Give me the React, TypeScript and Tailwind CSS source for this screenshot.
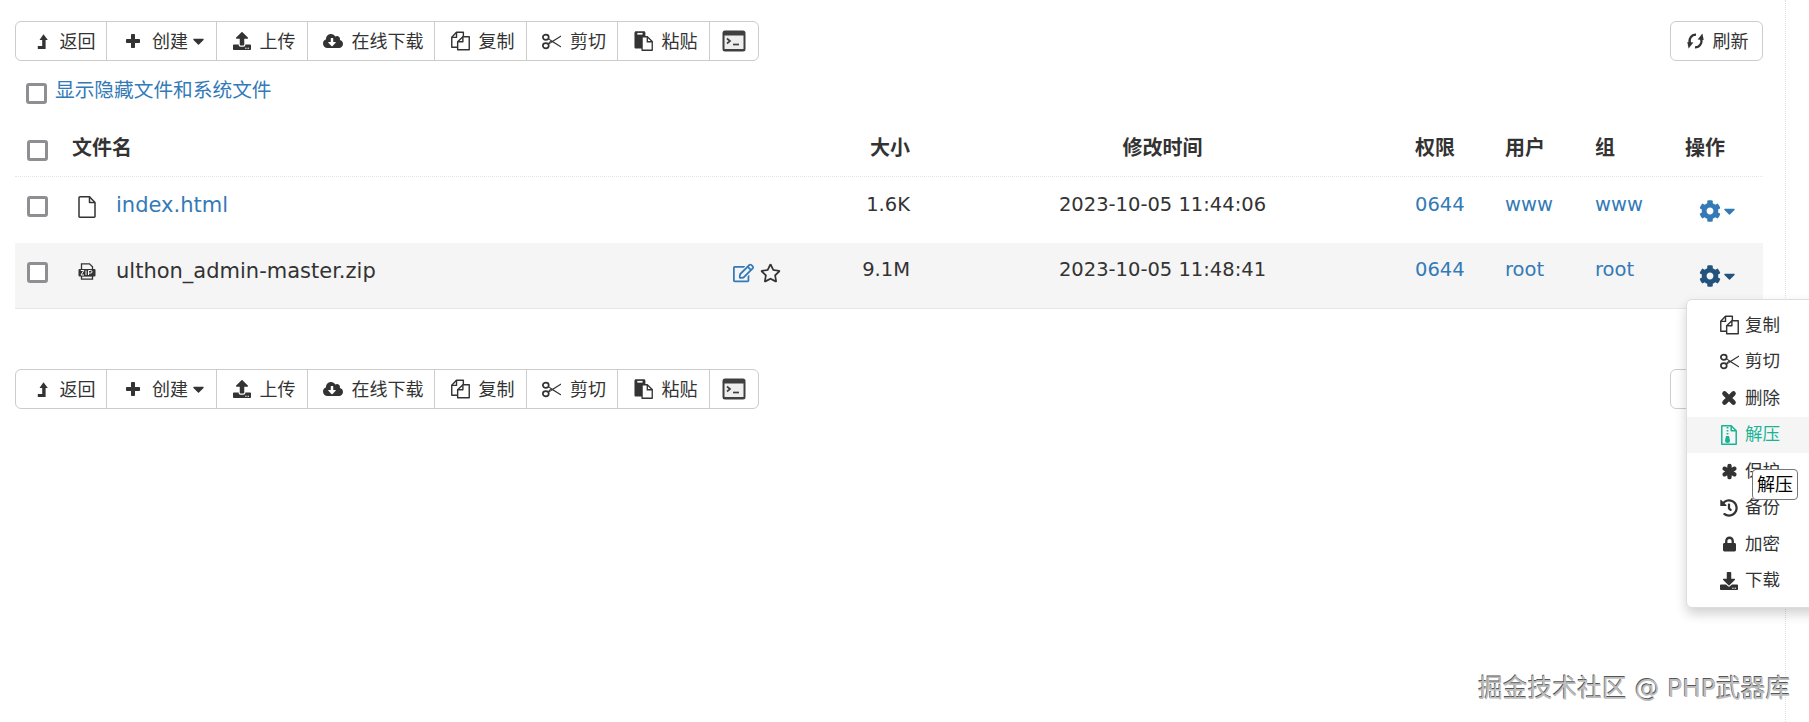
import React from 'react';
import {
    FaCaretDown,
    FaCloudDownloadAlt,
    FaCog,
    FaDownload,
    FaHistory,
    FaLock,
    FaRegEdit,
    FaRegStar,
    FaUpload,
} from 'react-icons/fa';

const cjkSans = 'font-["DejaVu_Sans","Noto_Sans_CJK_SC",sans-serif]';

function BackIcon({ className }: { className?: string }) {
    return (
        <svg className={className} viewBox="0 0 11 15" fill="currentColor">
            <path d="M6.500.3 10.800 6H8.600v9H.8v-3h4.400V6H2.500z" />
        </svg>
    );
}

function PlusIcon({ className }: { className?: string }) {
    return (
        <svg className={className} viewBox="0 0 16 16" fill="currentColor" stroke="currentColor" strokeWidth="1" strokeLinejoin="round">
            <path d="M6.500 1.500h3v5h5v3h-5v5h-3v-5h-5v-3h5z" />
        </svg>
    );
}

function CrossIcon({ className }: { className?: string }) {
    return (
        <svg className={className} viewBox="0 0 16 16" fill="none" stroke="currentColor" strokeWidth="4.600" strokeLinecap="round">
            <path d="M3.500 3.500l9 9M12.500 3.500l-9 9" />
        </svg>
    );
}

function StarBurstIcon({ className }: { className?: string }) {
    return (
        <svg className={className} viewBox="0 0 18 18" fill="none" stroke="currentColor" strokeWidth="4.600" strokeLinecap="round">
            <path d="M9 3v12M3.800 6l10.400 6M14.200 6 3.800 12" />
        </svg>
    );
}

function ArchiveIcon({ className }: { className?: string }) {
    return (
        <svg className={className} viewBox="0 0 16 20" fill="none" stroke="currentColor" strokeWidth="1.500" strokeLinejoin="round">
            <path d="M.8.8h9.400l5 5v13.400H.8z" />
            <path d="M10.200.8v5h5" />
            <path d="M6.500 2v1.500M6.500 5v1.500M6.500 8v1.500" strokeWidth="1.800" />
            <path d="M5 11h3l1 4.500a2.500 2.500 0 0 1-5 0z" fill="currentColor" stroke="none" />
        </svg>
    );
}

function FilesIcon({ className }: { className?: string }) {
    return (
        <svg className={className} viewBox="0 0 20 20" fill="none" stroke="currentColor" strokeWidth="1.500" strokeLinejoin="round">
            <path d="M7 16.500H.8V6l5-5.200H13V6" />
            <path d="M5.800.8v5.400H.8" />
            <path d="M7 10.800l5.500-5.300h6.700v13.700H7z" fill="#fff" />
            <path d="M12.500 5.500v5.300H7" />
        </svg>
    );
}

function ScissorsIcon({ className }: { className?: string }) {
    return (
        <svg className={className} viewBox="0 0 20 17" fill="none" stroke="currentColor" strokeLinejoin="round">
            <ellipse cx="4" cy="4" rx="3.100" ry="2.700" strokeWidth="1.800" />
            <ellipse cx="4" cy="13" rx="3.100" ry="2.700" strokeWidth="1.800" />
            <path d="M6.500 5.500 19.700 14 9.500 7.700 7 10.500" strokeWidth="1.100" />
            <path d="M6.500 11.500 19.700 3 9.500 9.300" strokeWidth="1.100" />
        </svg>
    );
}

function PasteIcon({ className }: { className?: string }) {
    return (
        <svg className={className} viewBox="0 0 20 21" fill="currentColor">
            <path d="M.5 2C.5 1 1.200.3 2 .3h8.500c.9 0 1.500.7 1.500 1.700v4H8.500v12.500H2c-.8 0-1.500-.7-1.500-1.500z" />
            <path d="M3.500 2h5.500v1.800H3.500z" fill="#fff" />
            <path d="M8.500 6H14l5.200 5v9.200H8.500z" fill="#fff" stroke="currentColor" strokeWidth="1.400" strokeLinejoin="round" />
            <path d="M14 6v5.300h5.200" fill="none" stroke="currentColor" strokeWidth="1.400" />
        </svg>
    );
}

function TerminalIcon({ className }: { className?: string }) {
    return (
        <svg className={className} viewBox="0 0 24 22">
            <rect x="0.500" y="0.500" width="23" height="21" rx="2.500" fill="#3f3f3f" />
            <rect x="2.500" y="5.500" width="19" height="13.500" fill="#eeeeee" />
            <path d="M5 8.500l3 2.500-3 2.500" fill="none" stroke="#3f3f3f" strokeWidth="1.700" />
            <path d="M11 14.500h6" stroke="#3f3f3f" strokeWidth="1.700" />
        </svg>
    );
}

function RefreshIcon({ className }: { className?: string }) {
    return (
        <svg className={className} viewBox="0 0 16 15">
            <path d="M8.500 1.600A6 6 0 0 0 2.800 9.800" fill="none" stroke="currentColor" strokeWidth="2.100" />
            <path d="M7.500 13.400A6 6 0 0 0 13.200 5.200" fill="none" stroke="currentColor" strokeWidth="2.100" />
            <path d="M.3 8.500 6 9 1.500 14.500z" fill="currentColor" />
            <path d="M15.700 6.500 10 6 14.500.5z" fill="currentColor" />
        </svg>
    );
}

function DocIcon({ className }: { className?: string }) {
    return (
        <svg className={className} viewBox="0 0 18 22" fill="none" stroke="currentColor" strokeWidth="1.500" strokeLinejoin="round">
            <path d="M1 1.800c0-.5.400-1 1-1h9.500L17 6.500v14c0 .4-.3.7-.8.7H1.800c-.5 0-.8-.3-.8-.7z" />
            <path d="M11.500.8v5.700H17" />
        </svg>
    );
}

function ZipIcon({ className }: { className?: string }) {
    return (
        <svg className={className} viewBox="0 0 18 17">
            <path d="M3.500.800h8l3 3v3h-11z" fill="none" stroke="#333" strokeWidth="1.300" />
            <path d="M3.500 12.500h11v3.700h-11z" fill="none" stroke="#333" strokeWidth="1.300" />
            <rect x="0.500" y="6" width="17" height="7.500" rx="1" fill="#333" />
            <path d="M2.800 7.500h3L3 12h3M8 7.500V12M10.500 12V7.500h2.200a1.200 1.200 0 0 1 0 2.600h-2.200" fill="none" stroke="#fff" strokeWidth="1" />
        </svg>
    );
}

function ToolButton({ sizing, icon, label, caret }: { sizing: string; icon: React.ReactNode; label?: string; caret?: boolean }) {
    return (
        <div className={`flex h-full items-center justify-center border-r border-[#ccc] last:border-r-0 text-[#333] ${sizing}`}>
            {icon}
            {label && <span className="mt-[2px] text-[18px] leading-none">{label}</span>}
            {caret && <FaCaretDown className="ml-[-7px] w-[13px] h-[18px]" />}
        </div>
    );
}

function Toolbar() {
    return (
        <div className="flex justify-between">
            <div className="flex h-[40px] w-[744px] rounded-[6px] border border-[#ccc] bg-white">
                <ToolButton sizing="w-[91px] pl-[10px] gap-[12px]" icon={<BackIcon className="w-[11px] h-[15px]" />} label="返回" />
                <ToolButton sizing="w-[110px] pl-[7px] gap-[11px]" icon={<PlusIcon className="w-[16px] h-[16px]" />} label="创建" caret />
                <ToolButton sizing="w-[91px] pl-[4px] gap-[9px]" icon={<FaUpload className="w-[18px] h-[18px]" />} label="上传" />
                <ToolButton sizing="w-[127px] pl-[4px] gap-[9px]" icon={<FaCloudDownloadAlt className="w-[20px] h-[20px]" />} label="在线下载" />
                <ToolButton sizing="w-[92px] pl-[4px] gap-[9px]" icon={<FilesIcon className="w-[19px] h-[20px]" />} label="复制" />
                <ToolButton sizing="w-[91px] pl-[4px] gap-[9px]" icon={<ScissorsIcon className="w-[19px] h-[17px]" />} label="剪切" />
                <ToolButton sizing="w-[92px] pl-[4px] gap-[9px]" icon={<PasteIcon className="w-[19px] h-[20px]" />} label="粘贴" />
                <ToolButton sizing="w-[48px]" icon={<TerminalIcon className="w-[24px] h-[22px]" />} />
            </div>
            <div className="flex h-[40px] w-[93px] items-center justify-center gap-[9px] rounded-[6px] border border-[#ccc] bg-white pl-[2px] text-[#333]">
                <RefreshIcon className="w-[17px] h-[16px]" />
                <span className="mt-[1px] text-[18px] leading-none">刷新</span>
            </div>
        </div>
    );
}

function Checkbox({ className }: { className?: string }) {
    return <div className={`h-[21px] w-[21px] rounded-[3px] border-[3px] border-[#8e8e93] bg-white ${className ?? ''}`} />;
}

const gridCols = 'grid grid-cols-[57px_728px_110px_505px_90px_90px_90px_78px]';

function FileRow({
    rowClass,
    cellTop,
    gearTop,
    icon,
    name,
    nameClass,
    extra,
    size,
    time,
    user,
    gearClass,
}: {
    rowClass: string;
    cellTop: string;
    gearTop: string;
    icon: React.ReactNode;
    name: string;
    nameClass: string;
    extra?: React.ReactNode;
    size: string;
    time: string;
    user: string;
    gearClass: string;
}) {
    return (
        <div className={`${gridCols} ${rowClass} text-[19.500px] leading-none`}>
            <div className="pl-[12px] pt-[19px]">
                <Checkbox />
            </div>
            <div className="flex items-start">
                <div className="flex h-[60px] w-[44px] items-start justify-start pl-[6px]">{icon}</div>
                <span className={`pt-[18px] text-[21px] ${nameClass}`}>{name}</span>
                {extra}
            </div>
            <div className={`${cellTop} text-right text-[#333]`}>{size}</div>
            <div className={`${cellTop} text-center text-[#333]`}>{time}</div>
            <div className={`${cellTop} text-[#337ab7]`}>0644</div>
            <div className={`${cellTop} text-[#337ab7]`}>{user}</div>
            <div className={`${cellTop} text-[#337ab7]`}>{user}</div>
            <div className={`flex items-start pl-[14px] ${gearTop} ${gearClass}`}>
                <FaCog className="h-[22px] w-[22px]" />
                <FaCaretDown className="mt-[2px] ml-[2px] h-[18px] w-[13px]" />
            </div>
        </div>
    );
}

function ActionMenu() {
    const items = [
        { label: '复制', icon: <FilesIcon className="w-[19px] h-[20px]" /> },
        { label: '剪切', icon: <ScissorsIcon className="w-[19px] h-[17px]" /> },
        { label: '删除', icon: <CrossIcon className="w-[16px] h-[16px]" /> },
        { label: '解压', icon: <ArchiveIcon className="w-[16px] h-[20px]" />, active: true },
        { label: '保护', icon: <StarBurstIcon className="w-[17px] h-[17px]" /> },
        { label: '备份', icon: <FaHistory className="w-[18px] h-[18px]" /> },
        { label: '加密', icon: <FaLock className="w-[13px] h-[16px]" /> },
        { label: '下载', icon: <FaDownload className="w-[18px] h-[18px]" /> },
    ];
    return (
        <div className="absolute left-[1686px] top-[299px] w-[140px] rounded-[6px] border border-[#ddd] bg-white pt-[7px] pb-[8px] shadow-[0_6px_12px_rgba(0,0,0,0.18)]">
            {items.map((item) => (
                <div key={item.label} className={`flex h-[36.500px] items-center ${item.active ? 'bg-[#f5f5f5] text-[#1ab394]' : 'text-[#333]'}`}>
                    <div className="flex w-[58px] justify-end pr-[6px]">
                        <div className="flex w-[20px] justify-center">{item.icon}</div>
                    </div>
                    <span className="text-[17.500px] leading-none">{item.label}</span>
                </div>
            ))}
            <div className="absolute left-[65px] top-[169px] rounded-[4px] border border-[#777] bg-white px-[4px] py-[3px] text-[18px] leading-[23px] text-black">
                解压
            </div>
        </div>
    );
}

export default function App() {
    return (
        <div className={`relative h-[722px] w-[1809px] overflow-hidden bg-white px-[15px] pt-[21px] ${cjkSans}`}>
            {/* page edge */}
            <div className="absolute bottom-0 left-[1785px] top-0 border-l border-dotted border-[#ddd]" />

            <div className="relative w-[1748px]">
                <Toolbar />

                <div className="mt-[17px] flex h-[26px] items-center pl-[11px]">
                    <Checkbox className="mt-[5px]" />
                    <span className="ml-[8px] text-[19.700px] leading-none text-[#337ab7]">显示隐藏文件和系统文件</span>
                </div>

                <div className={`${gridCols} mt-[15px] h-[58px] border-b border-dotted border-[#e5e5e5] text-[20px] font-bold leading-none text-[#333]`}>
                    <div className="pl-[12px] pt-[21px]">
                        <Checkbox />
                    </div>
                    <div className="pt-[19px]">文件名</div>
                    <div className="pt-[19px] text-right">大小</div>
                    <div className="pt-[19px] text-center">修改时间</div>
                    <div className="pt-[19px]">权限</div>
                    <div className="pt-[19px]">用户</div>
                    <div className="pt-[19px]">组</div>
                    <div className="pt-[19px]">操作</div>
                </div>

                <FileRow
                    rowClass="h-[66px]"
                    cellTop="pt-[18px]"
                    gearTop="pt-[23px]"
                    icon={<DocIcon className="mt-[19px] h-[22px] w-[18px] text-[#333]" />}
                    name="index.html"
                    nameClass="text-[#337ab7]"
                    size="1.6K"
                    time="2023-10-05 11:44:06"
                    user="www"
                    gearClass="text-[#337ab7]"
                />
                <FileRow
                    rowClass="h-[66px] border-b border-[#e7e7e7] bg-[#f5f5f5]"
                    cellTop="pt-[17px]"
                    gearTop="pt-[22px]"
                    icon={<ZipIcon className="mt-[20px] h-[17px] w-[18px]" />}
                    name="ulthon_admin-master.zip"
                    nameClass="text-[#333]"
                    extra={
                        <div className="ml-auto mr-[19px] flex items-center gap-[6px] pt-[20px]">
                            <FaRegEdit className="h-[20px] w-[21px] text-[#337ab7]" />
                            <FaRegStar className="h-[20px] w-[21px] text-[#333]" />
                        </div>
                    }
                    size="9.1M"
                    time="2023-10-05 11:48:41"
                    user="root"
                    gearClass="text-[#23527c]"
                />

                <div className="mt-[60px]">
                    <Toolbar />
                </div>
            </div>

            <ActionMenu />

            <div className="absolute left-[1478px] top-[673px] text-[24.800px] leading-[32px] text-[#bdbdbd] [text-shadow:-0.6px_-0.6px_0_#555]">
                掘金技术社区 @ PHP武器库
            </div>
        </div>
    );
}
